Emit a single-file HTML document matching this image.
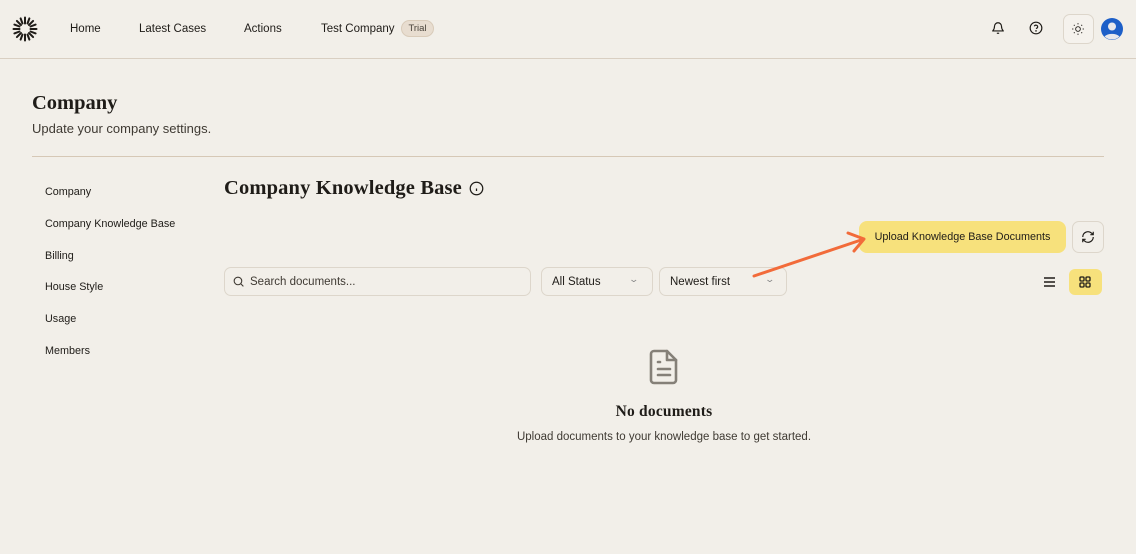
<!DOCTYPE html>
<html><head><meta charset="utf-8"><style>
*{box-sizing:border-box;margin:0;padding:0}
body{width:1136px;height:554px;background:#f2efe9;font-family:"Liberation Sans",sans-serif;color:#1f1c18;position:relative;overflow:hidden}
.a{position:absolute;white-space:nowrap}
.nav{font-size:11.5px}
.serif{font-family:"Liberation Serif",serif;font-weight:bold}
.side{font-size:10.8px;left:45px}
.box{position:absolute;border:1px solid #ddd6cb;border-radius:7px;background:#f2efe9}
</style></head><body>
<svg class="a" style="left:12px;top:16px" width="26" height="26" viewBox="0 0 26 26"><g stroke="#1f1c18" stroke-width="2" stroke-linecap="round">
<line x1="13" y1="1.5" x2="13" y2="7.5"/><line x1="13" y1="18.5" x2="13" y2="24.5"/><line x1="1.5" y1="13" x2="7.5" y2="13"/><line x1="18.5" y1="13" x2="24.5" y2="13"/>
<line x1="4.9" y1="4.9" x2="9" y2="9"/><line x1="17" y1="17" x2="21.1" y2="21.1"/><line x1="21.1" y1="4.9" x2="17" y2="9"/><line x1="9" y1="17" x2="4.9" y2="21.1"/>
<line x1="8.6" y1="2.4" x2="10.5" y2="7.5"/><line x1="15.5" y1="18.5" x2="17.4" y2="23.6"/><line x1="17.4" y1="2.4" x2="15.5" y2="7.5"/><line x1="10.5" y1="18.5" x2="8.6" y2="23.6"/>
<line x1="2.4" y1="8.6" x2="7.5" y2="10.5"/><line x1="18.5" y1="15.5" x2="23.6" y2="17.4"/><line x1="2.4" y1="17.4" x2="7.5" y2="15.5"/><line x1="18.5" y1="10.5" x2="23.6" y2="8.6"/></g></svg>
<div class="a nav" style="left:70px;top:23px">Home</div>
<div class="a nav" style="left:139px;top:23px">Latest Cases</div>
<div class="a nav" style="left:244px;top:23px">Actions</div>
<div class="a nav" style="left:321px;top:23px">Test Company</div>
<div class="a" style="left:401px;top:20px;width:33px;height:17px;border-radius:9px;background:#e8ddd0;border:1px solid #d9cbb9;font-size:9.5px;color:#4a443c;text-align:center;line-height:15px">Trial</div>
<svg class="a" style="left:991px;top:21px" width="14" height="14" viewBox="0 0 24 24" fill="none" stroke="#1f1c18" stroke-width="2"><path d="M6 9a6 6 0 0 1 12 0c0 6 3 7 3 8H3c0-1 3-2 3-8"/><path d="M10 21h4"/></svg>
<svg class="a" style="left:1029px;top:21px" width="14" height="14" viewBox="0 0 24 24" fill="none" stroke="#1f1c18" stroke-width="2"><circle cx="12" cy="12" r="10"/><path d="M9.1 9a3 3 0 0 1 5.8 1c0 2-3 3-3 3"/><circle cx="12" cy="17" r=".5"/></svg>
<div class="a" style="left:1063px;top:14px;width:31px;height:30px;border:1px solid #ddd6cb;border-radius:7px;background:#f5f2ed"></div>
<svg class="a" style="left:1071px;top:22px" width="14" height="14" viewBox="0 0 24 24" fill="none" stroke="#1f1c18" stroke-width="1.6"><circle cx="12" cy="12" r="4"/><path d="M12 2v2M12 20v2M2 12h2M20 12h2M4.9 4.9l1.4 1.4M17.7 17.7l1.4 1.4M4.9 19.1l1.4-1.4M17.7 6.3l1.4-1.4"/></svg>
<svg class="a" style="left:1101px;top:18px" width="22" height="22" viewBox="0 0 22 22"><circle cx="11" cy="11" r="11" fill="#1d5fc8"/><circle cx="11" cy="8.5" r="4" fill="#e8e8ec"/><path d="M3.5 18.5a9 6 0 0 1 15 0A11 11 0 0 1 3.5 18.5z" fill="#e8e8ec"/></svg>
<div class="a" style="left:0;top:58px;width:1136px;height:1px;background:#d9cfc2"></div>
<div class="a serif" style="left:32px;top:92px;font-size:20.5px">Company</div>
<div class="a" style="left:32px;top:121px;font-size:13px;color:#3f3a33">Update your company settings.</div>
<div class="a" style="left:32px;top:156px;width:1072px;height:1px;background:#d6c8b6"></div>
<div class="a side" style="top:186px">Company</div>
<div class="a side" style="top:218px">Company Knowledge Base</div>
<div class="a side" style="top:250px">Billing</div>
<div class="a side" style="top:281px">House Style</div>
<div class="a side" style="top:313px">Usage</div>
<div class="a side" style="top:345px">Members</div>
<div class="a serif" style="left:224px;top:177px;font-size:20.5px;letter-spacing:0.15px">Company Knowledge Base</div>
<svg class="a" style="left:469px;top:181px" width="15" height="15" viewBox="0 0 24 24" fill="none" stroke="#1f1c18" stroke-width="2"><circle cx="12" cy="12" r="10"/><path d="M12 16v-4M12 8h.01"/></svg>
<div class="a" style="left:859px;top:221px;width:207px;height:32px;border-radius:8px;background:#f7e17c;font-size:10.8px;text-align:center;line-height:33px">Upload Knowledge Base Documents</div>
<div class="box" style="left:1072px;top:221px;width:32px;height:32px"></div>
<svg class="a" style="left:1081px;top:230px" width="14" height="14" viewBox="0 0 24 24" fill="none" stroke="#1f1c18" stroke-width="2"><path d="M3 12a9 9 0 0 1 15-6.7L21 8M21 3v5h-5M21 12a9 9 0 0 1-15 6.7L3 16M3 21v-5h5"/></svg>
<div class="box" style="left:224px;top:267px;width:307px;height:29px"></div>
<svg class="a" style="left:232px;top:275px" width="13" height="13" viewBox="0 0 24 24" fill="none" stroke="#3f3a33" stroke-width="2"><circle cx="11" cy="11" r="7"/><path d="M21 21l-5-5"/></svg>
<div class="a" style="left:250px;top:276px;font-size:11.5px;color:#3f3a33">Search documents...</div>
<div class="box" style="left:541px;top:267px;width:112px;height:29px"></div>
<div class="a" style="left:552px;top:276px;font-size:11.5px">All Status</div>
<div class="a" style="left:630px;top:274px;font-size:9px;color:#888;transform:scaleX(1.4)">&#8964;</div>
<div class="box" style="left:659px;top:267px;width:128px;height:29px"></div>
<div class="a" style="left:670px;top:276px;font-size:11.5px">Newest first</div>
<div class="a" style="left:766px;top:274px;font-size:9px;color:#888;transform:scaleX(1.4)">&#8964;</div>
<svg class="a" style="left:752px;top:230px" width="120" height="50" viewBox="0 0 120 50" fill="none" stroke="#f26b3a" stroke-width="3" stroke-linecap="round" stroke-linejoin="round"><path d="M2 46L112 9M96 3l16 6-10 12"/></svg>
<svg class="a" style="left:1043px;top:276px" width="13" height="12" viewBox="0 0 13 12" stroke="#1f1c18" stroke-width="1.5"><path d="M1 2h11M1 6h11M1 10h11"/></svg>
<div class="a" style="left:1069px;top:269px;width:33px;height:26px;border-radius:6px;background:#f7e17c"></div>
<svg class="a" style="left:1079px;top:276px" width="12" height="12" viewBox="0 0 12 12" fill="none" stroke="#1f1c18" stroke-width="1.3"><rect x="1" y="1" width="4" height="4" rx="1"/><rect x="7" y="1" width="4" height="4" rx="1"/><rect x="1" y="7" width="4" height="4" rx="1"/><rect x="7" y="7" width="4" height="4" rx="1"/></svg>
<svg class="a" style="left:648px;top:349px" width="32" height="36" viewBox="0 0 32 36" fill="none" stroke="#858078" stroke-width="2.6" stroke-linecap="round" stroke-linejoin="round"><path d="M19 2H6a3 3 0 0 0-3 3v26a3 3 0 0 0 3 3h19a3 3 0 0 0 3-3V11z"/><path d="M19 2v9h9"/><path d="M10 13h2M10 20h12M10 26h12"/></svg>
<div class="a serif" style="left:0;width:1328px;top:403px;font-size:15.5px;font-weight:bold;text-align:center;letter-spacing:0.2px">No documents</div>
<div class="a" style="left:0;width:1328px;top:431px;font-size:11.5px;text-align:center;color:#3f3a33">Upload documents to your knowledge base to get started.</div>
</body></html>
